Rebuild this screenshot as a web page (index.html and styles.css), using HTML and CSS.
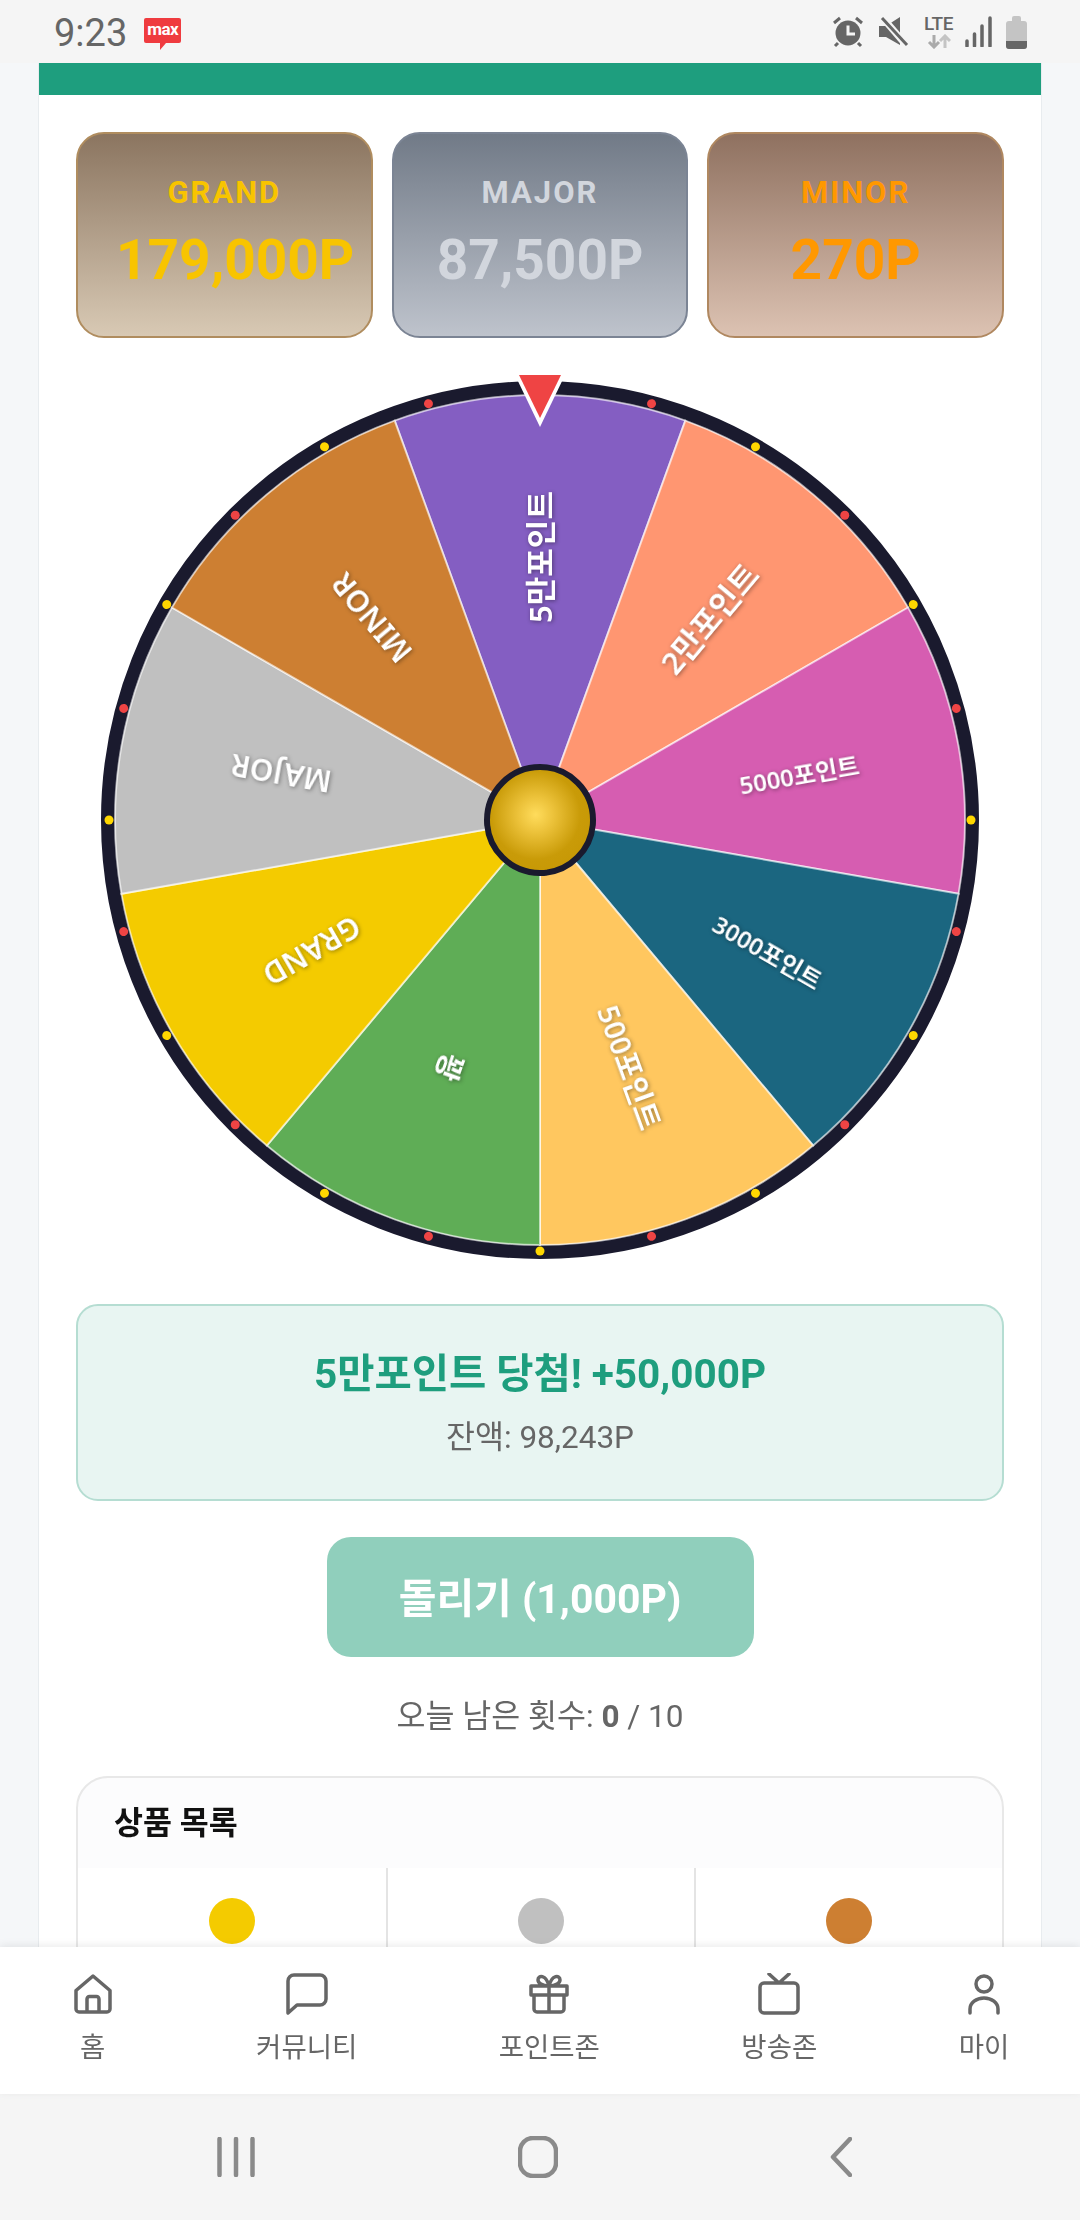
FILE: index.html
```html
<!DOCTYPE html>
<html lang="ko">
<head>
  <meta charset="UTF-8">
  <title>룰렛</title>
  <link rel="stylesheet" href="styles.css">
</head>
<body>
  <div class="status-bar">
    <div class="status-left">
      <span class="clock">9:23</span>
      <span class="max-badge">max</span>
    </div>
    <div class="status-right">
      <svg class="st-alarm" width="32" height="32" viewBox="0 0 32 32">
        <circle cx="16" cy="17" r="12.5" fill="#666"/>
        <path d="M16 9.5V18H23" fill="none" stroke="#f5f5f5" stroke-width="3"/>
        <path d="M2 7L8 2M30 7L24 2M6 27L3 30M26 27L29 30" fill="none" stroke="#666" stroke-width="3"/>
      </svg>
      <svg class="st-mute" width="30" height="31" viewBox="0 0 30 31">
        <path d="M0 10H7L21 1V29L7 21H0Z" fill="#666"/>
        <path d="M3 1L28 30" stroke="#f5f5f5" stroke-width="7"/>
        <path d="M3 2L28 29" stroke="#666" stroke-width="3"/>
      </svg>
      <div class="st-lte">
        <span>LTE</span>
        <svg width="24" height="15" viewBox="0 0 24 15">
          <path d="M7 1V12M2 8L7 13L12 8" fill="none" stroke="#aaa" stroke-width="3"/>
          <path d="M18 14V3M13 7L18 2L23 7" fill="none" stroke="#c4c4c4" stroke-width="3"/>
        </svg>
      </div>
      <svg class="st-signal" width="27" height="31" viewBox="0 0 27 31">
        <path d="M2 30V25M9.500 30V18M17 30V10M25 30V2" stroke="#666" stroke-width="3.500" stroke-linecap="round"/>
      </svg>
      <div class="st-battery"><i></i></div>
    </div>
  </div>

  <main class="screen">
    <div class="container">
      <div class="top-bar"></div>
      <div class="content">
        <div class="jackpots">
          <div class="jackpot grand">
            <div class="jp-name">GRAND</div>
            <div class="jp-value">179,000P</div>
          </div>
          <div class="jackpot major">
            <div class="jp-name">MAJOR</div>
            <div class="jp-value">87,500P</div>
          </div>
          <div class="jackpot minor">
            <div class="jp-name">MINOR</div>
            <div class="jp-value">270P</div>
          </div>
        </div>

        <svg class="wheel" width="880" height="890" viewBox="-440 -445 880 890">
          <defs>
            <radialGradient id="hubGold" cx="0.46" cy="0.45" r="0.56">
              <stop offset="0" stop-color="#ffdc5c"/>
              <stop offset="0.3" stop-color="#ecc23a"/>
              <stop offset="0.75" stop-color="#c99b08"/>
              <stop offset="1" stop-color="#c79805"/>
            </radialGradient>
            <path id="slice" d="M0 0L-145.360 -399.370A425 425 0 0 1 145.360 -399.370Z"/>
          </defs>

          <circle class="rim" r="432"/>

          <g class="slices">
            <use href="#slice" fill="#845ec2"/>
            <use href="#slice" fill="#ff9671" transform="rotate(40)"/>
            <use href="#slice" fill="#d65db1" transform="rotate(80)"/>
            <use href="#slice" fill="#1b6680" transform="rotate(120)"/>
            <use href="#slice" fill="#ffc75f" transform="rotate(160)"/>
            <use href="#slice" fill="#5fad56" transform="rotate(200)"/>
            <use href="#slice" fill="#f4cb00" transform="rotate(240)"/>
            <use href="#slice" fill="#c0c0c0" transform="rotate(280)"/>
            <use href="#slice" fill="#cd7f32" transform="rotate(320)"/>
          </g>

          <g class="bulbs-red">
            <circle r="4.500" cy="-431" transform="rotate(15)"/>
            <circle r="4.500" cy="-431" transform="rotate(45)"/>
            <circle r="4.500" cy="-431" transform="rotate(75)"/>
            <circle r="4.500" cy="-431" transform="rotate(105)"/>
            <circle r="4.500" cy="-431" transform="rotate(135)"/>
            <circle r="4.500" cy="-431" transform="rotate(165)"/>
            <circle r="4.500" cy="-431" transform="rotate(195)"/>
            <circle r="4.500" cy="-431" transform="rotate(225)"/>
            <circle r="4.500" cy="-431" transform="rotate(255)"/>
            <circle r="4.500" cy="-431" transform="rotate(285)"/>
            <circle r="4.500" cy="-431" transform="rotate(315)"/>
            <circle r="4.500" cy="-431" transform="rotate(345)"/>
          </g>
          <g class="bulbs-yellow">
            <circle r="4.500" cy="-431" transform="rotate(30)"/>
            <circle r="4.500" cy="-431" transform="rotate(60)"/>
            <circle r="4.500" cy="-431" transform="rotate(90)"/>
            <circle r="4.500" cy="-431" transform="rotate(120)"/>
            <circle r="4.500" cy="-431" transform="rotate(150)"/>
            <circle r="4.500" cy="-431" transform="rotate(180)"/>
            <circle r="4.500" cy="-431" transform="rotate(210)"/>
            <circle r="4.500" cy="-431" transform="rotate(240)"/>
            <circle r="4.500" cy="-431" transform="rotate(270)"/>
            <circle r="4.500" cy="-431" transform="rotate(300)"/>
            <circle r="4.500" cy="-431" transform="rotate(330)"/>
          </g>

          <g class="labels">
            <text class="lb-lg" transform="rotate(-90) translate(263 0)">5만포인트</text>
            <text class="lb-lg" transform="rotate(-50) translate(263 0)">2만포인트</text>
            <text class="lb-sm" transform="rotate(-10) translate(263 0)">5000포인트</text>
            <text class="lb-sm" transform="rotate(30) translate(263 0)">3000포인트</text>
            <text class="lb-md" transform="rotate(70) translate(263 0)">500포인트</text>
            <text class="lb-md" transform="rotate(110) translate(263 0)">꽝</text>
            <text class="lb-en" transform="rotate(150) translate(263 0)">GRAND</text>
            <text class="lb-en" transform="rotate(190) translate(263 0)">MAJOR</text>
            <text class="lb-en" transform="rotate(230) translate(263 0)">MINOR</text>
          </g>

          <circle class="hub" r="53"/>

          <polygon class="pointer-edge" points="-25,-445 25,-445 0,-393"/>
          <polygon class="pointer" points="-21,-445 21,-445 0,-402"/>
        </svg>

        <div class="result">
          <div class="result-title">5만포인트 당첨! +50,000P</div>
          <div class="result-sub">잔액: 98,243P</div>
        </div>

        <button class="spin-btn" type="button">돌리기 (1,000P)</button>
        <p class="spins-left">오늘 남은 횟수: <b>0</b> / 10</p>

        <section class="prizes">
          <h3 class="prizes-title">상품 목록</h3>
          <div class="prize-grid">
            <div class="prize"><span class="coin coin-gold"></span></div>
            <div class="prize"><span class="coin coin-silver"></span></div>
            <div class="prize"><span class="coin coin-bronze"></span></div>
          </div>
        </section>
      </div>
    </div>
  </main>

  <nav class="bottom-nav">
    <a class="nav-item">
      <svg width="38" height="40" viewBox="0 0 38 40"><path d="M2 16.500L19 2L36 16.500V35a3 3 0 0 1-3 3H5a3 3 0 0 1-3-3ZM13 38V25a2.500 2.500 0 0 1 2.500-2.500h7A2.500 2.500 0 0 1 25 25V38"/></svg>
      <span>홈</span>
    </a>
    <a class="nav-item">
      <svg width="42" height="42" viewBox="0 0 42 42"><path d="M8 2H34a6 6 0 0 1 6 6V26a6 6 0 0 1-6 6H11L2 40V8A6 6 0 0 1 8 2Z"/></svg>
      <span>커뮤니티</span>
    </a>
    <a class="nav-item">
      <svg width="40" height="40" viewBox="0 0 40 40"><path d="M2 12H38V21H2ZM5 21H35V35a3 3 0 0 1-3 3H8a3 3 0 0 1-3-3ZM20 12V38M20 12C13 12 9 9 9 6C9 1 17 0 20 12C23 0 31 1 31 6C31 9 27 12 20 12Z"/></svg>
      <span>포인트존</span>
    </a>
    <a class="nav-item">
      <svg width="42" height="42" viewBox="0 0 42 42"><path d="M6 10H36a4 4 0 0 1 4 4V36a4 4 0 0 1-4 4H6a4 4 0 0 1-4-4V14a4 4 0 0 1 4-4ZM11 1L21 10L31 1"/></svg>
      <span>방송존</span>
    </a>
    <a class="nav-item">
      <svg width="32" height="40" viewBox="0 0 32 40"><circle cx="16" cy="10" r="8"/><path d="M2 39V35a14 11 0 0 1 28 0V39"/></svg>
      <span>마이</span>
    </a>
  </nav>

  <div class="system-nav">
    <svg class="sys-recent" width="38" height="40" viewBox="0 0 38 40"><path d="M2.500 2V38M19 2V38M35.500 2V38"/></svg>
    <svg class="sys-home" width="40" height="42" viewBox="0 0 40 42"><rect x="2" y="2" width="36" height="38" rx="13"/></svg>
    <svg class="sys-back" width="22" height="40" viewBox="0 0 22 40"><path d="M20 2L3 20L20 38"/></svg>
  </div>
</body>
</html>
```

FILE: styles.css
```css
* {
  box-sizing: border-box;
}

body {
  margin: 0;
  width: 1080px;
  height: 2220px;
  display: flex;
  flex-direction: column;
  overflow: hidden;
  background-color: #f5f7f9;
  font-family: Roboto, "Noto Sans CJK KR", sans-serif;
  color: #666;
}

/* status bar */
.status-bar {
  height: 63px;
  flex: none;
  display: flex;
  justify-content: space-between;
  align-items: flex-start;
  padding: 16px 53px 0 54px;
  background-color: #f5f5f5;
}

.status-left {
  display: flex;
  align-items: flex-start;
  gap: 17px;
}

.clock {
  font-size: 38px;
  line-height: 34px;
  color: #666;
}

.max-badge {
  position: relative;
  width: 37px;
  height: 25px;
  margin-top: 2px;
  border-radius: 2px;
  background-color: #ef3b3f;
  color: #fff;
  font-size: 17px;
  font-weight: 700;
  line-height: 23px;
  letter-spacing: -0.5px;
  text-align: center;
}

.max-badge::after {
  content: "";
  position: absolute;
  left: 16px;
  top: 25px;
  border-top: 7px solid #ef3b3f;
  border-right: 6px solid transparent;
}

.status-right {
  display: flex;
  align-items: flex-start;
  gap: 14px;
  height: 34px;
}

.st-mute {
  margin-left: 1px;
}

.st-lte {
  width: 31px;
  margin-top: -1px;
  display: flex;
  flex-direction: column;
  align-items: center;
  font-size: 19px;
  font-weight: 500;
  line-height: 18px;
  letter-spacing: -0.5px;
}

.st-lte svg {
  display: block;
  margin-top: 1px;
}

.st-signal {
  margin-left: -3px;
}

.st-battery {
  position: relative;
  width: 21px;
  height: 28px;
  margin-top: 5px;
  border-radius: 3px;
  background-color: #c4c4c4;
  overflow: visible;
}

.st-battery::before {
  content: "";
  position: absolute;
  left: 6px;
  top: -5px;
  width: 9px;
  height: 6px;
  border-radius: 2px 2px 0 0;
  background-color: #c4c4c4;
}

.st-battery i {
  display: block;
  margin-top: 20px;
  height: 8px;
  border-radius: 0 0 3px 3px;
  background-color: #666;
}

/* page */
.screen {
  flex: 1;
  min-height: 0;
  overflow: hidden;
  padding: 0 39px;
}

.container {
  background-color: #fff;
  min-height: 100%;
  outline: 1px solid #e8ecef;
}

.top-bar {
  height: 32px;
  background-color: #1e9e7e;
}

.content {
  padding: 37px 37px 0;
}

.jackpots {
  display: flex;
  gap: 19px;
}

.jackpot {
  flex: 1 1 0;
  min-width: 0;
  height: 206px;
  padding: 42px 38px 0;
  border: 2px solid;
  border-radius: 28px;
  text-align: center;
  white-space: nowrap;
}

.jp-name {
  font-size: 31px;
  font-weight: 700;
  line-height: 34px;
  letter-spacing: 2px;
}

.jp-value {
  margin-top: 16px;
  font-size: 55px;
  font-weight: 700;
  line-height: 68px;
}

.grand {
  background: linear-gradient(180deg, #8b7560, #d8c9b4);
  border-color: #b08d5f;
  color: #f8c400;
}

.major {
  background: linear-gradient(180deg, #717a87, #bec3cc);
  border-color: #7b8494;
  color: #d2d6dd;
}

.minor {
  background: linear-gradient(180deg, #8f7160, #dcc2b2);
  border-color: #b08860;
  color: #ff9800;
}

/* wheel */
.wheel {
  display: block;
  margin: 37px auto 0;
}

.rim {
  fill: none;
  stroke: #1a1a2e;
  stroke-width: 14;
}

.slices use {
  stroke: rgba(255, 255, 255, 0.6);
  stroke-width: 2;
}

.bulbs-red {
  fill: #ef4444;
}

.bulbs-yellow {
  fill: #ffd700;
}

.labels {
  fill: #fff;
  font-family: "Noto Sans", "Noto Sans CJK KR", sans-serif;
  font-weight: 600;
  text-anchor: middle;
  dominant-baseline: central;
  filter: drop-shadow(1px 1px 2px rgba(0, 0, 0, 0.4));
}

.lb-sm {
  font-size: 24px;
}

.lb-md {
  font-size: 29px;
}

.lb-en {
  font-size: 30px;
}

.lb-lg {
  font-size: 31px;
}

.hub {
  fill: url(#hubGold);
  stroke: #1a1a2e;
  stroke-width: 6;
}

.pointer-edge {
  fill: #fff;
}

.pointer {
  fill: #ef4444;
}

/* result */
.result {
  margin-top: 39px;
  height: 197px;
  padding-top: 40px;
  border: 2px solid #b5ddd2;
  border-radius: 22px;
  background-color: #e8f5f2;
  text-align: center;
}

.result-title {
  font-size: 40.5px;
  font-weight: 700;
  line-height: 56px;
  color: #1e9e7e;
}

.result-sub {
  margin-top: 16px;
  font-size: 31.5px;
  line-height: 40px;
  color: #666;
}

.spin-btn {
  display: block;
  width: 427px;
  height: 120px;
  margin: 36px auto 0;
  padding: 0 0 4px;
  border: none;
  border-radius: 24px;
  background-color: #90cfbc;
  color: #fff;
  font-family: inherit;
  font-size: 41px;
  font-weight: 700;
}

.spins-left {
  margin: 41px 0 0;
  font-size: 31.5px;
  line-height: 38px;
  text-align: center;
  color: #666;
}

/* prizes */
.prizes {
  margin-top: 40px;
  border: 2px solid #e8e8e8;
  border-radius: 32px 32px 0 0;
  background-color: #fcfcfd;
}

.prizes-title {
  margin: 0;
  height: 90px;
  padding: 27px 0 0 36px;
  font-size: 31.5px;
  font-weight: 700;
  line-height: 38px;
  color: #111;
}

.prize-grid {
  display: grid;
  grid-template-columns: repeat(3, 1fr);
  height: 200px;
  background-color: #fff;
}

.prize {
  display: flex;
  justify-content: center;
  padding-top: 30px;
  border-left: 2px solid #e4e4e4;
}

.prize:first-child {
  border-left: none;
}

.coin {
  width: 46px;
  height: 46px;
  border-radius: 50%;
}

.coin-gold {
  background-color: #f4cb00;
}

.coin-silver {
  background-color: #c0c0c0;
}

.coin-bronze {
  background-color: #cd7f32;
}

/* bottom nav */
.bottom-nav {
  position: relative;
  flex: none;
  height: 147px;
  display: flex;
  justify-content: space-around;
  align-items: flex-start;
  padding-top: 26px;
  background-color: #fff;
  box-shadow: 0 -2px 8px rgba(0, 0, 0, 0.08);
}

.nav-item {
  min-width: 44px;
  display: flex;
  flex-direction: column;
  align-items: center;
  font-size: 27.5px;
  line-height: 36px;
  color: #666;
}

.nav-item svg {
  display: block;
  height: 42px;
  margin-bottom: 15px;
  fill: none;
  stroke: #666;
  stroke-width: 3.500;
  stroke-linejoin: round;
  stroke-linecap: round;
}

/* android nav */
.system-nav {
  flex: none;
  height: 126px;
  display: flex;
  align-items: center;
  padding-left: 217px;
  background-color: #f5f5f5;
}

.system-nav svg {
  display: block;
  fill: none;
  stroke: #8a8a8a;
  stroke-width: 4.500;
  stroke-linecap: round;
  stroke-linejoin: round;
}

.sys-home {
  margin-left: 263px;
}

.sys-back {
  margin-left: 272px;
}
```
